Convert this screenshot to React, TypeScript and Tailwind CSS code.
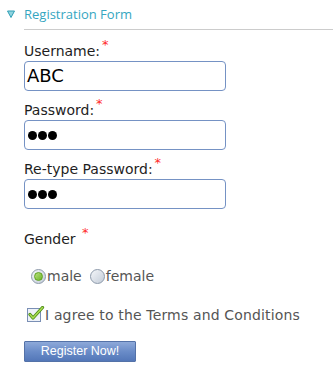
import React from "react";

const Star = () => (
  <span className="relative -top-[7px] ml-[2px] text-[13px] leading-none text-[#ff2a2a]">*</span>
);

const Dots = () => (
  <div className="flex items-center gap-[1px] pl-[3px]">
    <span className="h-[9px] w-[9px] rounded-full bg-black" />
    <span className="h-[9px] w-[9px] rounded-full bg-black" />
    <span className="h-[9px] w-[9px] rounded-full bg-black" />
  </div>
);

const Field = ({ label, children, top }: { label: string; children: React.ReactNode; top: string }) => (
  <div className={`flex flex-col ${top}`}>
    <label className="h-[19px] text-[14px] leading-[19px] text-[#1e1e1e]">
      {label}
      <Star />
    </label>
    <div className="flex h-[30px] w-[202px] items-center rounded-[4px] border border-[#7592c4] bg-white">
      {children}
    </div>
  </div>
);

const Radio = ({ on }: { on?: boolean }) => (
  <span className="flex h-[15px] w-[15px] shrink-0 items-center justify-center rounded-full border border-[#8c99aa] bg-gradient-to-br from-[#f4f6f9] to-[#c3ccd8]">
    {on && <span className="h-[9px] w-[9px] rounded-full border border-[#5ea21e] bg-gradient-to-br from-[#b8e07a] to-[#6cb523]" />}
  </span>
);

export default function App() {
  return (
    <div className="h-[371px] w-[333px] bg-white font-['DejaVu_Sans',sans-serif]">
      <div className="flex h-[29px] items-end pb-[6px]">
        <svg width="8" height="8" viewBox="0 0 8 8" className="mb-[5px] ml-[7px] mr-[9px]">
          <path d="M0.5 1 L7.5 1 L4 7.5 Z" fill="#8fd3df" stroke="#2f9fb5" strokeWidth="1" />
        </svg>
        <span className="font-['Open_Sans',sans-serif] text-[13px] leading-[18px] text-[#35a6c1]">
          Registration Form
        </span>
      </div>
      <div className="ml-[24px] h-[1px] bg-[#cccccc]" />

      <div className="flex flex-col pl-[24px]">
        <Field label="Username:" top="mt-[12px]">
          <span className="pl-[2px] text-[18px] leading-none text-black">ABC</span>
        </Field>
        <Field label="Password:" top="mt-[10px]">
          <Dots />
        </Field>
        <Field label="Re-type Password:" top="mt-[10px]">
          <Dots />
        </Field>

        <div className="mt-[21px] h-[19px] text-[14px] leading-[19px] text-[#1e1e1e]">
          Gender <Star />
        </div>

        <div className="mt-[18px] flex items-center pl-[7px] text-[14px] leading-[18px] text-[#555555]">
          <Radio on />
          <span className="ml-[1px]">male</span>
          <span className="ml-[8px]"><Radio /></span>
          <span className="ml-[1px]">female</span>
        </div>

        <div className="mt-[21px] flex items-center pl-[3px] text-[14px] leading-[18px] tracking-[0.15px] text-[#555555]">
          <svg width="18" height="17" viewBox="0 0 18 17" className="-mt-[1px] shrink-0">
            <rect x="0.5" y="2.5" width="13" height="13" fill="#eef2f8" stroke="#7a8fb5" />
            <path d="M3 8.5 L6 12 L15.5 1.5" fill="none" stroke="#4a8a14" strokeWidth="3.2" strokeLinecap="round" strokeLinejoin="round" />
            <path d="M3 8.5 L6 12 L15.5 1.5" fill="none" stroke="#a8dc52" strokeWidth="1.6" strokeLinecap="round" strokeLinejoin="round" />
          </svg>
          <span>I agree to the Terms and Conditions</span>
        </div>

        <button className="mt-[17px] h-[21px] w-[112px] rounded-[1px] border border-[#5472a8] bg-gradient-to-b from-[#8ea9d9] via-[#6a8cc8] to-[#5377b8] font-['Liberation_Sans',sans-serif] text-[12.5px] leading-[19px] text-white">
          Register Now!
        </button>
      </div>
    </div>
  );
}
